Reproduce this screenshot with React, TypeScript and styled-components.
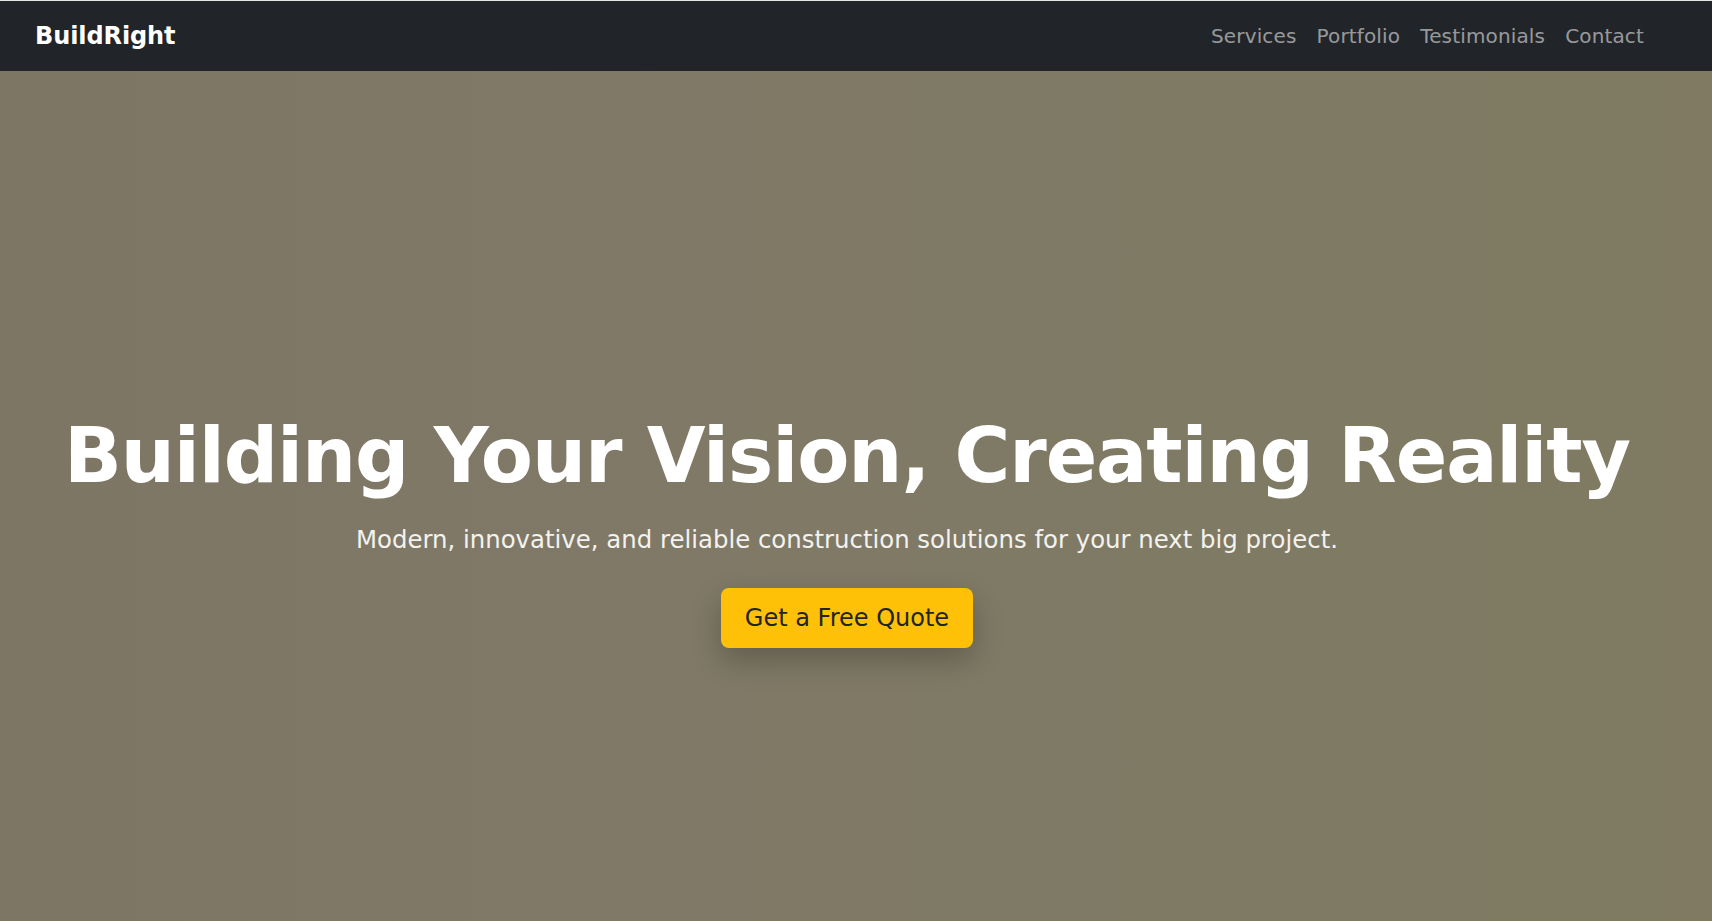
import React from 'react';
import styled, { createGlobalStyle } from 'styled-components';

// ---------
// GLOBAL
// ---------

let GlobalStyle = createGlobalStyle`
  html, body {
    margin: 0;
    padding: 0;
  }

  body {
    font-family: 'DejaVu Sans', 'Liberation Sans', sans-serif;
    background: #7f7865;
  }

  * {
    box-sizing: border-box;
  }
`;

let Page = styled.div`
  min-height: 100vh;
  display: flex;
  flex-direction: column;
`;

// ---------
// NAVBAR
// ---------

let Navbar = styled.nav`
  height: 71px;
  border-top: 1px solid #e6e6e6;
  background: #212529;
  display: flex;
  align-items: center;
  justify-content: space-between;
  padding: 0 68px 0 35px;
`;

let Brand = styled.a`
  color: #fff;
  font-weight: 700;
  font-size: 24px;
  letter-spacing: -0.1px;
  text-decoration: none;
`;

let NavLinks = styled.ul`
  display: flex;
  gap: 20px;
  margin: 0;
  padding: 0;
  list-style: none;
`;

let NavLink = styled.a`
  color: rgba(255, 255, 255, 0.55);
  font-size: 20px;
  letter-spacing: 0.15px;
  text-decoration: none;
`;

let links = ['Services', 'Portfolio', 'Testimonials', 'Contact'];

function AppNavbar() {
  return (
    <Navbar>
      <Brand href="#">BuildRight</Brand>
      <NavLinks>
        {links.map((label) => (
          <li key={label}>
            <NavLink href={`#${label.toLowerCase()}`}>{label}</NavLink>
          </li>
        ))}
      </NavLinks>
    </Navbar>
  );
}

// ---------
// HERO
// ---------

let Hero = styled.header`
  flex: 1;
  display: flex;
  flex-direction: column;
  align-items: center;
  justify-content: center;
  padding: 66px 18px 0 0;
  text-align: center;
  background: linear-gradient(
    90deg,
    #7e7665 0%,
    #807867 25%,
    #7f7966 45%,
    #7f7a64 70%,
    #807a62 100%
  );
`;

let Title = styled.h1`
  margin: 0;
  color: #fff;
  font-size: 76px;
  font-weight: 700;
  line-height: 1.2;
  letter-spacing: -1.08px;
  white-space: nowrap;
`;

let Lead = styled.p`
  margin: 21px 0 0;
  color: #f4f2ee;
  font-size: 24.4px;
  line-height: 1.5;
`;

let QuoteButton = styled.a`
  margin-top: 30px;
  padding: 12px 24px;
  border-radius: 8px;
  background: #ffc107;
  color: #212529;
  font-size: 24px;
  line-height: 1.5;
  text-decoration: none;
  box-shadow: 0 12px 30px rgba(0, 0, 0, 0.24);
`;

function HeroSection() {
  return (
    <Hero>
      <Title>Building Your Vision, Creating Reality</Title>
      <Lead>Modern, innovative, and reliable construction solutions for your next big project.</Lead>
      <QuoteButton href="#contact">Get a Free Quote</QuoteButton>
    </Hero>
  );
}

export default function App() {
  return (
    <Page>
      <GlobalStyle />
      <AppNavbar />
      <HeroSection />
    </Page>
  );
}
